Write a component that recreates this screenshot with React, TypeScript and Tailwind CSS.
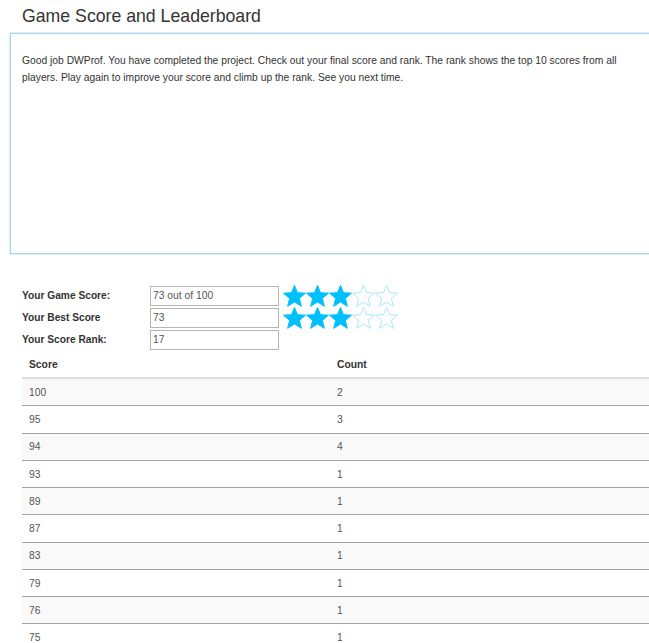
import React from "react";

const rows: [number, number][] = [
  [100, 2],
  [95, 3],
  [94, 4],
  [93, 1],
  [89, 1],
  [87, 1],
  [83, 1],
  [79, 1],
  [76, 1],
  [75, 1],
];

function Star({ filled }: { filled: boolean }) {
  return (
    <svg width="23" height="22" viewBox="0 0 24 23" className="block">
      <polygon
        points="12,0.5 15.2,8 23.5,8.5 17.1,14 19.2,22.3 12,17.8 4.8,22.3 6.9,14 0.5,8.5 8.8,8"
        fill={filled ? "#00bfff" : "none"}
        stroke={filled ? "#00bfff" : "#a8e4fb"}
        strokeWidth="1"
        strokeLinejoin="miter"
      />
    </svg>
  );
}

function Stars({ count }: { count: number }) {
  return (
    <div className="flex h-[22px] items-center">
      {[0, 1, 2, 3, 4].map((i) => (
        <Star key={i} filled={i < count} />
      ))}
    </div>
  );
}

function Field({ label, value }: { label: string; value: string }) {
  return (
    <div className="flex h-[22px] items-center">
      <div className="w-[128px] font-bold text-[10.2px] text-[#333]">{label}</div>
      <div className="flex h-[20px] w-[129px] items-center border border-[#b5b5b5] bg-white px-[2px] text-[10.3px] text-[#555]">
        {value}
      </div>
    </div>
  );
}

export default function App() {
  return (
    <div
      className="h-[643px] w-[649px] overflow-hidden bg-white text-[#333]"
      style={{ fontFamily: '"Liberation Sans", Arial, sans-serif' }}
    >
      <div className="w-[700px]">
        <h1 className="ml-[22px] pt-[5px] text-[17.7px] leading-[22px] text-[#333]">
          Game Score and Leaderboard
        </h1>
        <div className="ml-[10px] mt-[6px] h-[221px] w-[690px] border border-[#a9d7e8] shadow-[0_0_0_1px_#def0f7] pl-[11px] pr-[60px] pt-[18px]">
          <p className="text-[10.3px] leading-[17px] text-[#333]">
            Good job DWProf. You have completed the project. Check out your final score and rank.
            The rank shows the top 10 scores from all players. Play again to improve your score and
            climb up the rank. See you next time.
          </p>
        </div>

        <div className="ml-[22px] mt-[31px] flex">
          <div className="flex flex-col">
            <Field label="Your Game Score:" value="73 out of 100" />
            <Field label="Your Best Score" value="73" />
            <Field label="Your Score Rank:" value="17" />
          </div>
          <div className="ml-[4px] flex flex-col">
            <Stars count={3} />
            <Stars count={3} />
          </div>
        </div>

        <div className="ml-[22px] w-[678px] text-[10.3px]">
          <div className="flex h-[28px] items-center border-b-2 border-[#dddddd] pt-[1px] font-bold text-[#333]">
            <div className="w-[308px] pl-[7px]">Score</div>
            <div className="pl-[7px]">Count</div>
          </div>
          {rows.map(([score, count], i) => (
            <div
              key={score}
              className={
                "flex h-[27.25px] items-center border-b border-[#a3a3a3] pt-[1px] text-[#555] " +
                (i % 2 === 0 ? "bg-[#f9f9f9]" : "bg-white")
              }
            >
              <div className="w-[308px] pl-[7px]">{score}</div>
              <div className="pl-[7px]">{count}</div>
            </div>
          ))}
        </div>
      </div>
    </div>
  );
}
